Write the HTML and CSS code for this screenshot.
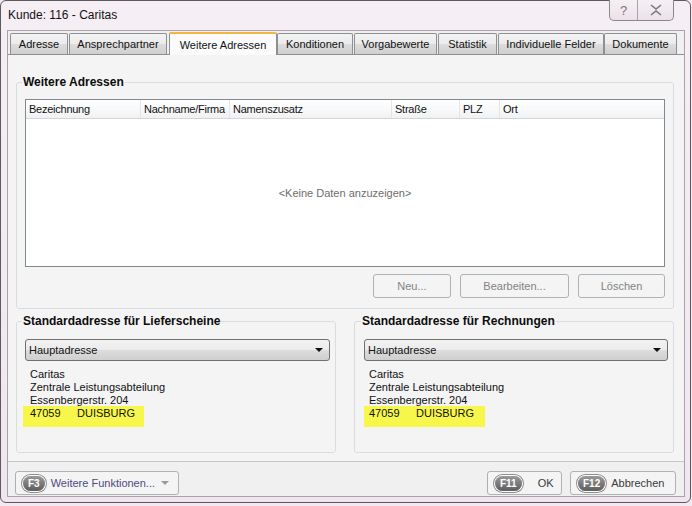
FILE: index.html
```html
<!DOCTYPE html>
<html lang="de">
<head>
<meta charset="utf-8">
<title>Kunde: 116 - Caritas</title>
<link rel="stylesheet" href="styles.css">
</head>
<body>
<div class="window">
  <div class="titlebar">
    <span class="title">Kunde: 116 - Caritas</span>
    <div class="capbtns">
      <span class="capbtn help">?</span>
      <span class="capbtn close">
        <svg width="14" height="12" viewBox="0 0 14 12"><path d="M2 1 L7 5 L12 1 M2 11 L7 7 L12 11" fill="none" stroke="#777" stroke-width="1.6"/></svg>
      </span>
    </div>
  </div>
  <div class="client">
    <div class="tabs">
      <span class="tab">Adresse</span>
      <span class="tab">Ansprechpartner</span>
      <span class="tab active">Weitere Adressen</span>
      <span class="tab">Konditionen</span>
      <span class="tab">Vorgabewerte</span>
      <span class="tab">Statistik</span>
      <span class="tab">Individuelle Felder</span>
      <span class="tab">Dokumente</span>
    </div>
    <div class="panel">
      <fieldset class="group top">
        <legend>Weitere Adressen</legend>
        <div class="grid">
          <div class="ghead">
            <span class="c1">Bezeichnung</span>
            <span class="c2">Nachname/Firma</span>
            <span class="c3">Namenszusatz</span>
            <span class="c4">Straße</span>
            <span class="c5">PLZ</span>
            <span class="c6">Ort</span>
          </div>
          <div class="gbody">&lt;Keine Daten anzuzeigen&gt;</div>
        </div>
        <div class="btnrow">
          <span class="btn b-neu">Neu...</span>
          <span class="btn b-bear">Bearbeiten...</span>
          <span class="btn b-los">Löschen</span>
        </div>
      </fieldset>
      <div class="bottomgroups">
        <fieldset class="group addr">
          <legend>Standardadresse für Lieferscheine</legend>
          <div class="combo"><span>Hauptadresse</span><i class="arrow"></i></div>
          <div class="lines">
            <div>Caritas</div>
            <div>Zentrale Leistungsabteilung</div>
            <div>Essenbergerstr. 204</div>
            <div class="hl"><span class="plz">47059</span>DUISBURG</div>
          </div>
        </fieldset>
        <fieldset class="group addr">
          <legend>Standardadresse für Rechnungen</legend>
          <div class="combo"><span>Hauptadresse</span><i class="arrow"></i></div>
          <div class="lines">
            <div>Caritas</div>
            <div>Zentrale Leistungsabteilung</div>
            <div>Essenbergerstr. 204</div>
            <div class="hl"><span class="plz">47059</span>DUISBURG</div>
          </div>
        </fieldset>
      </div>
    </div>
    <div class="footer">
      <span class="fbtn more"><span class="key">F3</span><span class="ftext">Weitere Funktionen...</span><i class="sarrow"></i></span>
      <span class="spacer"></span>
      <span class="fbtn ok"><span class="key">F11</span><span class="ftext">OK</span></span>
      <span class="fbtn cancel"><span class="key">F12</span><span class="ftext">Abbrechen</span></span>
    </div>
  </div>
</div>
</body>
</html>
```
FILE: styles.css
```css
* { box-sizing: border-box; }
html, body { margin: 0; padding: 0; }
body {
  width: 692px; height: 506px; overflow: hidden;
  background: #f3e9f1;
  font-family: "Liberation Sans", Arial, sans-serif;
  font-size: 11px;
  color: #1e1e1e;
}
.window {
  width: 691px; height: 503px;
  border: 1px solid #5d5a5e;
  border-radius: 6px;
  background: linear-gradient(180deg, #f6eef5 0%, #f1e6ef 100%);
  padding: 0 5px 5px 6px;
  display: flex; flex-direction: column;
}
.titlebar {
  height: 29px; flex: none;
  display: flex; align-items: flex-start;
}
.title { font-size: 12px; color: #111; margin-top: 7px; margin-left: 1px; }
.capbtns {
  margin-left: auto; margin-right: 11px; margin-top: -1px;
  display: flex;
  border: 1px solid #8a8a8a; border-top: none;
  border-radius: 0 0 5px 5px;
  background: linear-gradient(180deg, #f5f0f4, #ece2ea);
  height: 21px;
}
.capbtn { display: flex; align-items: center; justify-content: center; color: #777; font-size: 13px; }
.capbtn.help { width: 28px; border-right: 1px solid #a9a2a8; }
.capbtn.close { width: 35px; }
.client {
  flex: 1;
  background: #f0f0f0;
  border: 1px solid #a7a3a7;
  display: flex; flex-direction: column;
}
.tabs {
  display: flex; align-items: flex-end;
  padding-left: 2px; height: 23px; flex: none;
  position: relative; z-index: 1;
}
.tab {
  height: 21px; padding: 0 4px;
  border: 1px solid #8e8f94; border-bottom: none;
  border-radius: 2px 2px 0 0;
  background: linear-gradient(180deg, #f3f3f3 0%, #ebebeb 50%, #dddddd 51%, #cfcfcf 100%);
  display: flex; align-items: center; justify-content: center;
  font-size: 11px; color: #111; white-space: nowrap;
}
.tab:nth-child(1) { width: 58px; }
.tab:nth-child(2) { width: 98px; margin-left: 1px; }
.tab:nth-child(3) { width: 108px; margin-left: 2px; }
.tab:nth-child(4) { width: 76px; }
.tab:nth-child(5) { width: 83px; margin-left: 1px; }
.tab:nth-child(6) { width: 59px; margin-left: 1px; }
.tab:nth-child(7) { width: 106px; margin-left: 1px; }
.tab:nth-child(8) { width: 73px; }
.tab.active {
  height: 23px; background: #fbfbfb;
  border-top: 2px solid #f3b640; margin-bottom: -1px;
  border-color: #8e8f94; border-top-color: #f3b640;
}
.panel {
  height: 408px; flex: none;
  border-top: 1px solid #8e8f94;
  border-bottom: 1px solid #c8c8c8;
  background: #f4f4f4;
  padding: 20px 10px 0 8px;
  display: flex; flex-direction: column;
}
.group {
  margin: 0; padding: 0;
  border: 1px solid #d8dde2; border-radius: 3px;
  min-width: 0;
}
.group legend {
  font-weight: bold; font-size: 12px; line-height: 15px; color: #0c0c0c;
  padding: 0 1px; margin-left: -3px;
}
.group.top { padding: 9px 8px 10px 8px; }
.grid {
  height: 168px; border: 1px solid #828790; background: #fff;
  display: flex; flex-direction: column;
}
.ghead {
  height: 19px; flex: none; display: flex;
  background: linear-gradient(180deg, #ffffff 0%, #f7f8f9 60%, #f0f1f2 100%);
  border-bottom: 1px solid #d5d5d5;
}
.ghead span {
  border-right: 1px solid #e4e5e7;
  padding-left: 3px; line-height: 18px; font-size: 11px; color: #111;
  white-space: nowrap; overflow: hidden; letter-spacing: -0.25px;
}
.c1 { width: 115px; } .c2 { width: 89px; } .c3 { width: 162px; }
.c4 { width: 68px; } .c5 { width: 40px; } .c6 { flex: 1; border-right: none !important; }
.gbody {
  flex: 1; display: flex; align-items: center; justify-content: center;
  color: #6d6d6d; font-size: 11px;
}
.btnrow { display: flex; justify-content: flex-end; gap: 9px; margin-top: 7px; }
.btn {
  height: 24px; border: 1px solid #adb2b5; border-radius: 3px;
  background: #f4f4f4; color: #838383;
  display: flex; align-items: center; justify-content: center; font-size: 11px;
}
.b-neu { width: 78px; } .b-bear { width: 109px; } .b-los { width: 87px; }
.bottomgroups { display: flex; gap: 18px; margin-top: 5px; }
.group.addr { width: 320px; height: 139px; padding: 10px 5px 0 8px; }
.group.addr + .group.addr { padding-left: 9px; }
.group.addr + .group.addr .hl { margin-left: 0; }
.combo {
  height: 22px; border: 1px solid #707070; border-radius: 3px;
  background: linear-gradient(180deg, #f2f2f2 0%, #ebebeb 50%, #dddddd 51%, #cfcfcf 100%);
  display: flex; align-items: center; padding: 0 6px 0 3px;
  font-size: 11px; color: #111;
}
.arrow {
  margin-left: auto; width: 0; height: 0;
  border-left: 4px solid transparent; border-right: 4px solid transparent;
  border-top: 4px solid #111;
}
.lines { margin-top: 7px; }
.lines div { height: 13px; line-height: 13px; font-size: 11px; padding-left: 5px; color: #111; }
.lines .hl {
  background: #f7f74b; width: 121px; height: 21px; line-height: 15px;
  margin-left: -2px; margin-top: -1px; padding-left: 7px;
}
.group.addr + .group.addr .hl { padding-left: 5px; }
.plz { display: inline-block; width: 47px; }
.footer {
  flex: 1; display: flex; align-items: flex-start;
  padding: 9px 8px 0 7px; gap: 8px;
}
.spacer { flex: 1; }
.fbtn {
  height: 24px; border: 1px solid #adb2b5; border-radius: 3px;
  background: #f4f4f4; display: flex; align-items: center;
  padding: 0 6px 0 5px; font-size: 11px;
}
.key {
  background: linear-gradient(180deg, #9a9a9a, #5d5d5d);
  color: #fff; font-weight: bold; font-size: 10px;
  border-radius: 8px; height: 15px; line-height: 15px;
  padding: 0 5px; box-shadow: 0 0 0 1px #fff, 0 0 0 2px #8c8c8c;
  margin-left: 2px; margin-right: 6px;
}
.more { width: 164px; }
.more .ftext { color: #4d4b80; }
.ok { width: 75px; gap: 10px; }
.cancel { width: 106px; }
.ok .ftext, .cancel .ftext { color: #3a3a3a; }
.sarrow {
  margin-left: 6px; width: 0; height: 0;
  border-left: 4px solid transparent; border-right: 4px solid transparent;
  border-top: 4px solid #9a9a9a;
}
```
